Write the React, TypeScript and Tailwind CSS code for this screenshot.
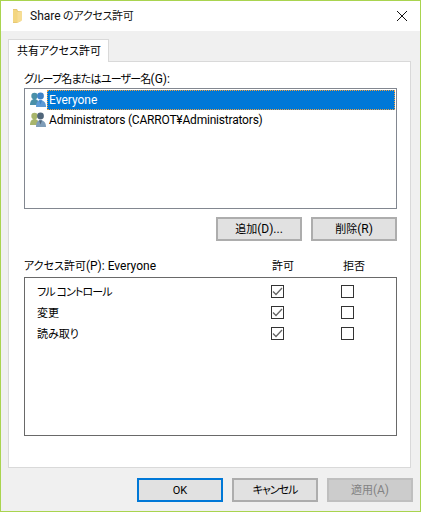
const FONT = "font-['Roboto','Noto_Sans_CJK_JP',sans-serif] [font-feature-settings:'palt']";

function FolderIcon() {
  return (
    <svg width="16" height="16" viewBox="0 0 16 16" className="shrink-0">
      <path d="M3 1h4l1 2h3v10l-4 2H3z" fill="#e6c874" />
      <path d="M7 4l5-1v9.500L7 15z" fill="#f6dd94" />
      <path d="M3 2h3.500l1 2v10.500L5 14H3z" fill="#f3d680" />
    </svg>
  );
}

function UsersIcon({ back, front, light }: { back: string; front: string; light: string }) {
  return (
    <svg width="18" height="18" viewBox="0 0 18 18" className="shrink-0">
      <circle cx="5.500" cy="5" r="3.200" fill={back} />
      <path d="M1 14c0-4 2-6 4.500-6S10 10 10 14z" fill={back} />
      <circle cx="11.500" cy="5" r="3.400" fill={front} />
      <path d="M7 16c0-5 2-7 4.500-7S17 11 17 16z" fill={light} />
      <path d="M10 9.500h3l-1.500 4z" fill={front} />
    </svg>
  );
}

function Checkbox({ checked }: { checked?: boolean }) {
  return (
    <div className="w-[13px] h-[13px] border border-[#333333] bg-white flex items-center justify-center">
      {checked && (
        <svg width="11" height="11" viewBox="0 0 11 11">
          <path d="M1 5.500L4 8.500L10 2" fill="none" stroke="#666666" strokeWidth="1.300" />
        </svg>
      )}
    </div>
  );
}

interface DialogButtonProps {
  label: string;
  suffix?: string;
  variant?: "default" | "disabled";
  tight?: boolean;
}

function DialogButton({ label, suffix, variant, tight }: DialogButtonProps) {
  const border =
    variant === "default"
      ? "border-2 border-[#0078d7] text-black bg-[#e1e1e1]"
      : variant === "disabled"
        ? "border-2 border-[#bfbfbf] text-[#838383] bg-[#cccccc]"
        : "border-2 border-[#adadad] text-black bg-[#e1e1e1]";
  return (
    <div className={`w-[86px] h-[24px] flex items-center justify-center ${tight ? "tracking-[-1px]" : ""} ${border}`}>
      <span>
        {label}
        {suffix && <span className="text-[12px]">{suffix}</span>}
      </span>
    </div>
  );
}

const rows = [
  { label: "フル コントロール", tracking: "tracking-[-0.9px]" },
  { label: "変更", tracking: "" },
  { label: "読み取り", tracking: "" },
];

export default function App() {
  return (
    <div className={`w-[421px] h-[512px] flex flex-col bg-[#f0f0f0] border border-[#a9d44f] text-[11px] leading-none text-black overflow-hidden ${FONT}`}>
      {/* Title bar */}
      <div className="h-[30px] bg-white flex items-center pl-[9px] pr-[12px] gap-[4px]">
        <FolderIcon />
        <span className="flex-1 text-[#111111] tracking-[-0.3px]">
          <span className="text-[12px] tracking-normal">Share</span> のアクセス許可
        </span>
        <svg width="12" height="12" viewBox="0 0 12 12">
          <path d="M1 1L11 11M11 1L1 11" stroke="#111111" strokeWidth="1" fill="none" />
        </svg>
      </div>

      <div className="flex-1 flex flex-col px-[7px] pt-[8px]">
        {/* Tab */}
        <div className="flex">
          <div className="w-[101px] h-[23px] -mb-px z-10 bg-white border border-b-0 border-[#d9d9d9] flex items-center pl-[8px] whitespace-nowrap">
            共有アクセス許可
          </div>
        </div>

        {/* Panel */}
        <div className="w-[403px] h-[407px] bg-white border border-[#d9d9d9] flex flex-col pl-[15px] pr-[13px]">
          <div className="h-[26px] flex items-end pb-[3px]">
            <span className="tracking-[-0.8px]">
              グループ名またはユーザー名<span className="text-[12px] tracking-normal">(G):</span>
            </span>
          </div>

          <div className="h-[121px] border border-[#828790] bg-white p-px flex flex-col text-[12px]">
            <div className="h-[20px] flex items-center">
              <div className="w-[21px] flex justify-center pl-[3px]">
                <UsersIcon back="#4a90a8" front="#3f83c8" light="#5e9bd6" />
              </div>
              <div className="flex-1 h-[20px] bg-[#0078d7] text-white border border-dotted border-[#f0a040] flex items-center pl-[1px]">
                Everyone
              </div>
            </div>
            <div className="h-[20px] flex items-center">
              <div className="w-[21px] flex justify-center pl-[3px]">
                <UsersIcon back="#a8b56c" front="#51667a" light="#7f9db8" />
              </div>
              <div className="pl-[2px] whitespace-nowrap tracking-[-0.2px]">Administrators (CARROT¥Administrators)</div>
            </div>
          </div>

          <div className="flex justify-end gap-[9px] mt-[8px]">
            <DialogButton label="追加" suffix="(D)..." />
            <DialogButton label="削除" suffix="(R)" />
          </div>

          {/* Permissions */}
          <div className="h-[36px] flex items-end pb-[5px]">
            <span className="w-[248px]">
              アクセス許可<span className="text-[12px]">(P): Everyone</span>
            </span>
            <span className="w-[71px]">許可</span>
            <span>拒否</span>
          </div>
          <div className="h-[159px] border border-[#696969] bg-white pt-[3px] flex flex-col">
            {rows.map((row) => (
              <div key={row.label} className="h-[21px] flex items-center">
                <span className={`w-[246px] pl-[12px] pt-px ${row.tracking}`}>{row.label}</span>
                <div className="w-[70px]">
                  <Checkbox checked />
                </div>
                <Checkbox />
              </div>
            ))}
          </div>
        </div>

        {/* Bottom buttons */}
        <div className="flex justify-end gap-[9px] mt-[10px]">
          <DialogButton label="OK" variant="default" />
          <DialogButton label="キャンセル" tight />
          <DialogButton label="適用" suffix="(A)" variant="disabled" />
        </div>
      </div>
    </div>
  );
}
